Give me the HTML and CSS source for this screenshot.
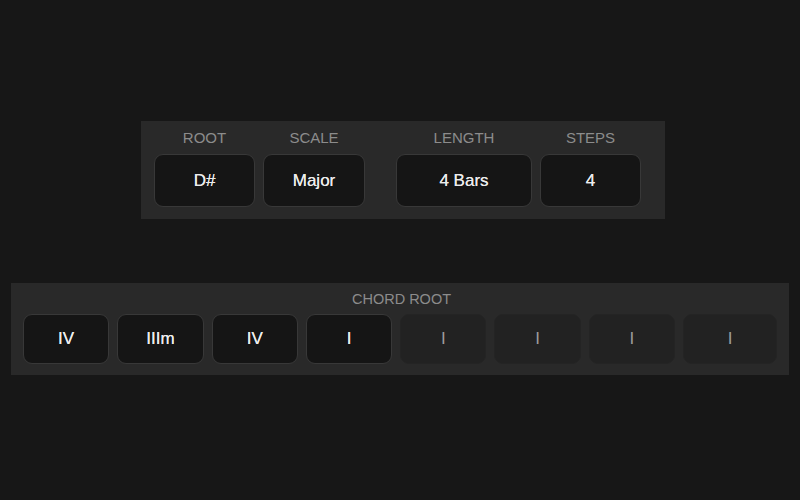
FILE: index.html
```html
<!DOCTYPE html>
<html lang="en">
<head>
<meta charset="utf-8">
<title>Progression</title>
<link rel="stylesheet" href="styles.css">
</head>
<body>
  <main class="app">
    <section class="panel settings">
      <div class="field field-root">
        <span class="label">ROOT</span>
        <button class="cell">D#</button>
      </div>
      <div class="field field-scale">
        <span class="label">SCALE</span>
        <button class="cell">Major</button>
      </div>
      <div class="field field-length">
        <span class="label">LENGTH</span>
        <button class="cell">4 Bars</button>
      </div>
      <div class="field field-steps">
        <span class="label">STEPS</span>
        <button class="cell">4</button>
      </div>
    </section>

    <section class="panel chords">
      <span class="label">CHORD ROOT</span>
      <div class="chord-row">
        <button class="cell chord">IV</button>
        <button class="cell chord">IIIm</button>
        <button class="cell chord">IV</button>
        <button class="cell chord">I</button>
        <button class="cell chord off">I</button>
        <button class="cell chord off">I</button>
        <button class="cell chord off">I</button>
        <button class="cell chord off">I</button>
      </div>
    </section>
  </main>
</body>
</html>
```

FILE: styles.css
```css
* {
  box-sizing: border-box;
}

html,
body {
  margin: 0;
  height: 100%;
  background: #171717;
}

body {
  font-family: "Liberation Sans", Arial, sans-serif;
  color: #e8e8e8;
}

.app {
  display: flex;
  flex-direction: column;
  align-items: flex-start;
  gap: 64px;
  padding-top: 121px;
}

.panel {
  background: #292929;
}

.label {
  display: block;
  font-size: 15px;
  line-height: 20px;
  color: #8c8c8c;
  text-align: center;
}

.cell {
  display: flex;
  align-items: center;
  justify-content: center;
  margin: 0;
  padding: 0;
  font-family: inherit;
  font-size: 17px;
  font-weight: 400;
  color: #ececec;
  text-shadow: 0 0 0.4px #ececec;
  background: #151515;
  border: 1.5px solid #383838;
  border-radius: 9px;
}

/* key / scale / length / steps selectors */
.settings {
  margin-left: 141px;
  width: 524px;
  height: 98px;
  padding: 7px 0 0 13px;
  display: flex;
  gap: 8px;
}

.field {
  display: flex;
  flex-direction: column;
  gap: 6px;
}

.field .cell {
  height: 53px;
}

.field-root { width: 101px; }
.field-scale { width: 102px; }
.field-length { width: 136px; margin-left: 23px; }
.field-steps { width: 101px; }

/* chord root sequence */
.chords {
  margin-left: 11px;
  width: 778px;
  height: 92px;
  padding: 6px 12px 0;
  display: flex;
  flex-direction: column;
  gap: 5px;
}

.chords .label {
  font-size: 14.5px;
  padding-left: 3px;
}

.chord-row {
  display: grid;
  grid-template-columns: repeat(7, 86.3px) 1fr;
  gap: 8px;
}

.chord {
  height: 50px;
}

.chord.off {
  background: #222222;
  border-color: #242424;
  color: #9c9c9c;
  text-shadow: none;
}
```
